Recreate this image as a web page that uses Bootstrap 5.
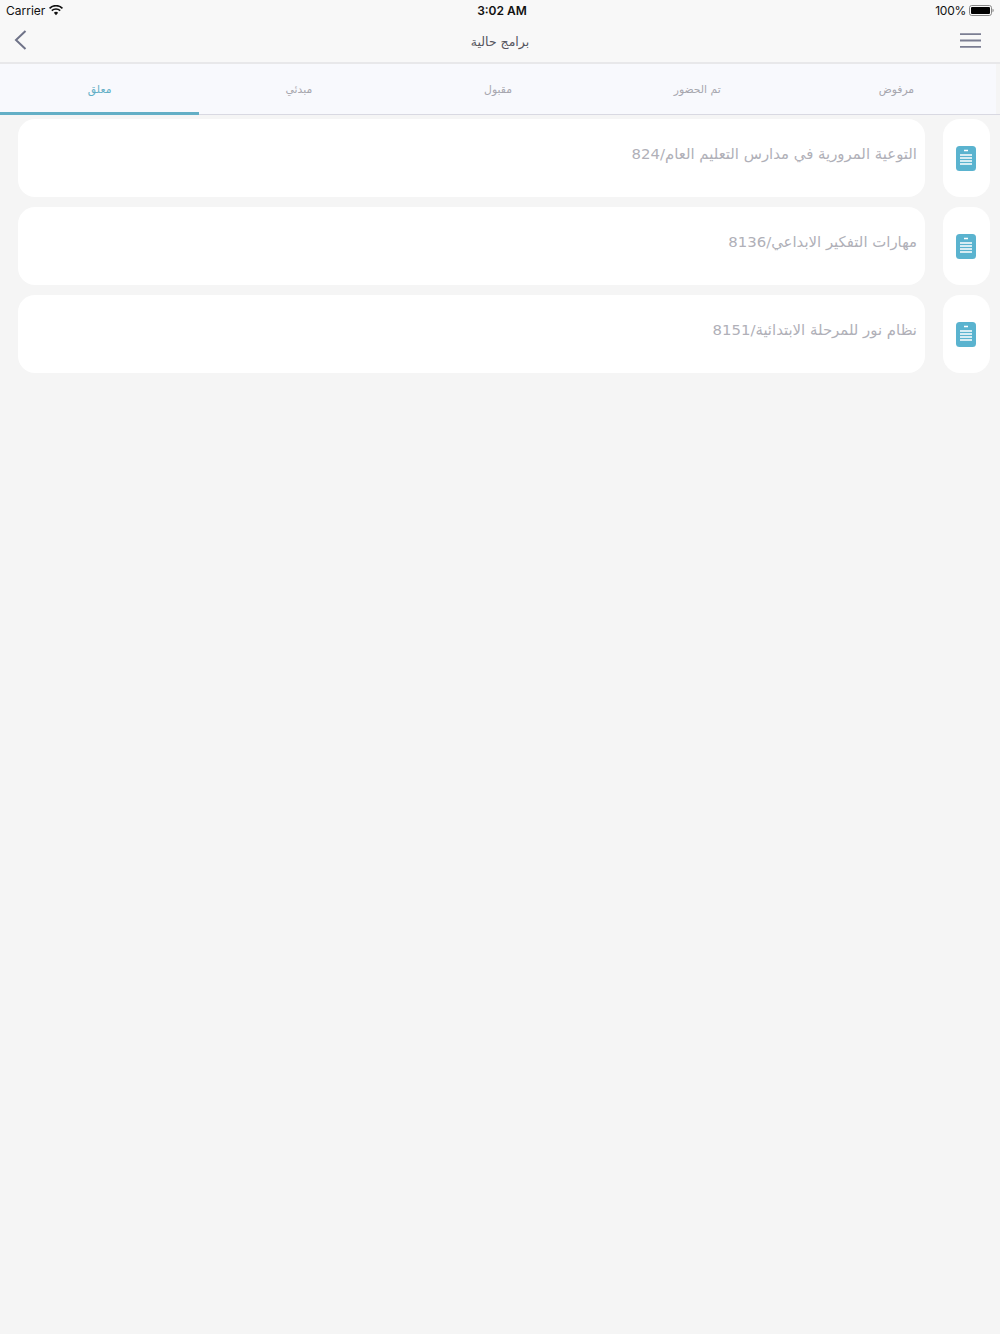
<!doctype html>
<html lang="ar">
<head>
<meta charset="utf-8">
<title>برامج حالية</title>
<link href="https://cdn.jsdelivr.net/npm/bootstrap@5.3.0/dist/css/bootstrap.min.css" rel="stylesheet">
<style>
html,body{height:100%}
body{background:#f5f5f5;font-family:"DejaVu Sans",sans-serif;width:1000px;height:1334px;overflow:hidden}
.topbar{background:#f8f8f8;height:64px;border-bottom:2px solid #e8e8ea}
.statusbar{height:20px;padding:1px 6px 0;font-family:Inter,"Liberation Sans",sans-serif;font-size:12px;color:#111}
.statusbar b{font-weight:600;font-size:12px}
.pctlabel{margin-right:-1px;letter-spacing:-.25px}
.clockcell{position:absolute;left:4px;right:0;top:3px;text-align:center;line-height:16px}
.navrow{height:42px;padding:0 19px 2px 14px}
.navtitle{position:absolute;left:0;right:0;top:32px;text-align:center;font-size:12.5px;line-height:20px;color:#55555d}
.tabsbar{height:51px;width:996px;background:#f8f9fd}
.tabline{width:1000px;height:1px;background:#d9d9e2;margin-top:-1px}
.tabcell{width:199.2px;height:51px;padding-top:17px;text-align:center;font-size:10.8px;line-height:18px;color:#a6a6ae;border-bottom:3px solid transparent}
.tabcell.is-on{color:#63afc6;border-bottom-color:#63afc6;position:relative;z-index:1}
.rowlist{padding:4px 10px 0 18px;gap:10px}
.rowline{height:78px;gap:18px}
.titlebox{width:907px;height:78px;background:#fff;border-radius:17px;padding:24px 8px 0 0;font-size:14.9px;line-height:22px;color:#b0b0b8}
.iconbox{width:47px;height:78px;background:#fff;border-radius:17px;padding-right:1px}
</style>
</head>
<body class="position-relative">
<div class="topbar position-relative">
  <div class="statusbar d-flex justify-content-between align-items-center">
    <div class="d-flex align-items-center gap-1">
      <span>Carrier</span>
      <svg width="14" height="11" viewBox="0 0 15 11"><path d="M7.5 10.6 5.2 8a3.3 3.3 0 0 1 4.6 0zM3.6 6.4 2.4 5a7.4 7.4 0 0 1 10.2 0l-1.2 1.4a5.6 5.6 0 0 0-7.8 0zM1.2 3.8 0 2.5a10.7 10.7 0 0 1 15 0l-1.2 1.3a9 9 0 0 0-12.6 0z" fill="#111"/></svg>
    </div>
    <div class="clockcell"><b>3:02 AM</b></div>
    <div class="d-flex align-items-center gap-1">
      <span class="pctlabel">100%</span>
      <svg width="25" height="11" viewBox="0 0 25 11"><rect x=".5" y=".5" width="22" height="10" rx="2.2" fill="none" stroke="#888"/><rect x="2" y="2" width="19" height="7" rx="1" fill="#000"/><path d="M23.5 3.8c.8.2 1.2.8 1.2 1.7s-.4 1.5-1.2 1.7z" fill="#888"/></svg>
    </div>
  </div>
  <div class="navrow d-flex justify-content-between align-items-center">
    <svg width="13" height="20" viewBox="0 0 13 20"><path d="M11.5 1 2 10l9.5 9" fill="none" stroke="#6f7388" stroke-width="2"/></svg>
    <svg width="21" height="15" viewBox="0 0 21 15"><path d="M0 1.2h21M0 7.5h21M0 13.8h21" stroke="#7b7e92" stroke-width="1.8"/></svg>
  </div>
  <div class="navtitle" dir="rtl">برامج حالية</div>
</div>
<div class="tabsbar d-flex" dir="rtl">
  <div class="tabcell">مرفوض</div>
  <div class="tabcell">تم الحضور</div>
  <div class="tabcell">مقبول</div>
  <div class="tabcell">مبدئي</div>
  <div class="tabcell is-on">معلق</div>
</div>
<div class="tabline"></div>
<div class="rowlist d-flex flex-column" dir="rtl">
  <div class="rowline d-flex">
    <div class="iconbox d-flex align-items-center justify-content-center"><svg width="20" height="25" viewBox="0 0 20 25"><rect width="20" height="25" rx="3.5" fill="#5ab3cf"/><path d="M8 4.5h4M4 9h12M4 12h12M4 15h12M4 18h12" stroke="#fff" stroke-width="1.4"/></svg></div>
    <div class="titlebox">التوعية المرورية في مدارس التعليم العام/824</div>
  </div>
  <div class="rowline d-flex">
    <div class="iconbox d-flex align-items-center justify-content-center"><svg width="20" height="25" viewBox="0 0 20 25"><rect width="20" height="25" rx="3.5" fill="#5ab3cf"/><path d="M8 4.5h4M4 9h12M4 12h12M4 15h12M4 18h12" stroke="#fff" stroke-width="1.4"/></svg></div>
    <div class="titlebox">مهارات التفكير الابداعي/8136</div>
  </div>
  <div class="rowline d-flex">
    <div class="iconbox d-flex align-items-center justify-content-center"><svg width="20" height="25" viewBox="0 0 20 25"><rect width="20" height="25" rx="3.5" fill="#5ab3cf"/><path d="M8 4.5h4M4 9h12M4 12h12M4 15h12M4 18h12" stroke="#fff" stroke-width="1.4"/></svg></div>
    <div class="titlebox">نظام نور للمرحلة الابتدائية/8151</div>
  </div>
</div>
<script src="https://cdn.jsdelivr.net/npm/bootstrap@5.3.0/dist/js/bootstrap.bundle.min.js"></script>
</body>
</html>
